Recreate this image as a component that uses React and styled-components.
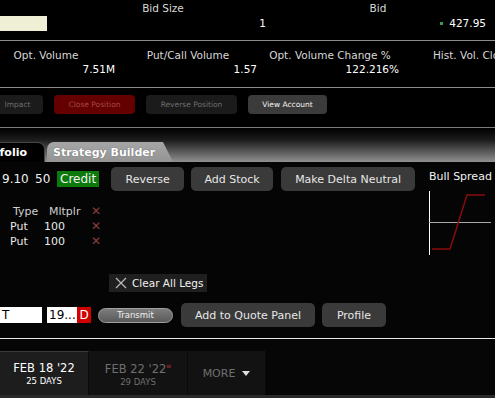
import React from "react";
import styled, { createGlobalStyle } from "styled-components";

const Global = createGlobalStyle`
  html, body {
    margin: 0;
    padding: 0;
    background: #000;
  }
  body {
    width: 495px;
    height: 398px;
    overflow: hidden;
    font-family: "DejaVu Sans", Verdana, sans-serif;
    color: #fff;
  }
`;

const Page = styled.div`
  width: 495px;
  height: 398px;
  overflow: hidden;
  display: flex;
  flex-direction: column;
  background: #000;
`;

/* ---------- quote header ---------- */
const QuoteGrid = styled.div`
  display: grid;
  grid-template-columns: 58px 210px 220px 1fr;
  grid-template-rows: 15px 15px;
  padding: 1px 0 9px;
  border-bottom: 1px solid #8c8c8c;
  font-size: 10.5px;
`;

const QuoteLabel = styled.div`
  color: #d8d8d8;
  text-align: center;
  line-height: 15px;
`;

const QuoteValue = styled.div`
  text-align: right;
  line-height: 15px;
  padding-right: 2px;
  display: flex;
  justify-content: flex-end;
  align-items: center;
  gap: 6px;
`;

const Beige = styled.div`
  width: 47px;
  height: 15px;
  background: #efefd6;
`;

const Tick = styled.span`
  width: 3px;
  height: 3px;
  background: #3f9a4d;
`;

/* ---------- stats ---------- */
const StatsRow = styled.div`
  display: flex;
  margin-left: -25px;
  height: 46px;
  border-bottom: 1px solid #8c8c8c;
  font-size: 10.5px;
`;

const Stat = styled.div`
  flex: 0 0 142px;
  display: flex;
  flex-direction: column;
  padding-top: 7px;
  white-space: nowrap;
`;

const StatLabel = styled.div`
  color: #d8d8d8;
  text-align: center;
  line-height: 14px;
`;

const StatValue = styled.div`
  text-align: right;
  padding-right: 2px;
  line-height: 14px;
`;

/* ---------- action buttons ---------- */
const ActionRow = styled.div`
  display: flex;
  gap: 11px;
  padding: 7px 0 13px;
  margin-left: -8px;
  border-bottom: 1px solid #7a7a7a;
`;

const ActionButton = styled.button`
  flex: 0 0 auto;
  height: 19px;
  width: ${(p) => p.$w}px;
  border: none;
  border-radius: 4px;
  font-family: "DejaVu Sans", Verdana, sans-serif;
  font-size: 7.5px;
  padding: 0;
  background: ${(p) =>
    p.$variant === "danger" ? "#640000" : p.$variant === "on" ? "#3b3b3b" : "#1b1b1b"};
  color: ${(p) =>
    p.$variant === "danger" ? "#a34a4a" : p.$variant === "on" ? "#f4f4f4" : "#6e6e6e"};
`;

/* ---------- tabs ---------- */
const TabBar = styled.div`
  height: 34px;
  display: flex;
  align-items: flex-end;
  background: linear-gradient(to bottom, #000 0%, #1c1c1c 35%, #909090 100%);
`;

const Tab = styled.div`
  flex: 0 0 auto;
  height: 20px;
  display: flex;
  align-items: center;
  font-size: 11px;
  font-weight: bold;
  white-space: nowrap;
  box-sizing: border-box;
  ${(p) =>
    p.$active
      ? `
    background: #000;
    width: 45px;
    border-radius: 0 7px 0 0;
    border-top: 1px solid #454545;
    border-right: 1px solid #454545;
    overflow: hidden;
    justify-content: flex-end;
    padding-right: 17px;
  `
      : `
    background: linear-gradient(to bottom, #a6a6a6, #949494);
    margin-left: 2px;
    width: 126px;
    padding-left: 6px;
    border-radius: 7px 0 0 0;
    clip-path: polygon(0 0, 116px 0, 126px 100%, 0 100%);
    text-shadow: 0 0 1px #555;
  `}
`;

/* ---------- builder ---------- */
const Builder = styled.div`
  display: flex;
  height: 176px;
  border-bottom: 1px solid #e6e6e6;
  background: #050505;
`;

const BuilderMain = styled.div`
  flex: 0 0 425px;
  display: flex;
  flex-direction: column;
`;

const TopRow = styled.div`
  display: flex;
  align-items: center;
  padding: 5px 0 0 2px;
  height: 24px;
  font-size: 12px;
`;

const Num = styled.span`
  width: ${(p) => p.$w}px;
  color: #eee;
`;

const Credit = styled.span`
  background: #0b7a0b;
  color: #f2f2f2;
  padding: 0 3px;
  line-height: 16px;
  margin-right: 12px;
`;

const GrayButton = styled.button`
  flex: 0 0 auto;
  height: 24px;
  width: ${(p) => p.$w}px;
  border: none;
  border-radius: 5px;
  background: #3a3a3a;
  color: #e6e6e6;
  font-family: "DejaVu Sans", Verdana, sans-serif;
  font-size: 11px;
  padding: 0;
  margin-right: ${(p) => p.$mr || 7}px;
`;

const Legs = styled.div`
  display: grid;
  grid-template-columns: 37px 44px 20px;
  grid-auto-rows: 15px;
  align-items: center;
  margin: 13px 0 0 10px;
  font-size: 11px;
  color: #e8e8e8;
`;

const LegHead = styled.span`
  color: #d0d0d0;
  padding-left: ${(p) => (p.$indent ? 2 : 3)}px;
`;

const LegCell = styled.span`
  margin-left: ${(p) => p.$ml || 0}px;
`;

const RemoveX = styled.span`
  color: #8a3d3d;
  font-weight: bold;
  font-size: 12px;
  line-height: 15px;
`;

const ClearButton = styled.button`
  align-self: flex-start;
  margin: 25px 0 0 109px;
  height: 18px;
  width: 98px;
  display: flex;
  align-items: center;
  gap: 5px;
  padding: 0 0 0 6px;
  border: none;
  background: #1f1f1f;
  color: #f0f0f0;
  font-family: "DejaVu Sans", Verdana, sans-serif;
  font-size: 10.5px;
  white-space: nowrap;
`;

const OrderRow = styled.div`
  display: flex;
  align-items: center;
  margin-top: 11px;
  height: 24px;
`;

const Field = styled.div`
  width: ${(p) => p.$w}px;
  height: 16px;
  background: #fff;
  color: #000;
  font-size: 12px;
  line-height: 16px;
  padding-left: 2px;
  box-sizing: border-box;
  margin-right: ${(p) => p.$mr || 0}px;
  overflow: hidden;
  white-space: nowrap;
`;

const RedTag = styled.div`
  width: 14px;
  height: 16px;
  background: #d10000;
  color: #fff;
  font-size: 12px;
  line-height: 16px;
  text-align: center;
  margin-right: 7px;
`;

const Transmit = styled.button`
  flex: 0 0 auto;
  width: 75px;
  height: 15px;
  border-radius: 8px;
  border: 1px solid #a0a0a0;
  background: linear-gradient(to bottom, #7c7c7c, #5a5a5a);
  color: #f0f0f0;
  font-family: "DejaVu Sans", Verdana, sans-serif;
  font-size: 8.5px;
  padding: 0;
  margin-right: 8px;
`;

const SideChart = styled.div`
  display: flex;
  flex-direction: column;
  padding: 7px 0 0 4px;
`;

const ChartTitle = styled.div`
  font-size: 11px;
  color: #f2f2f2;
  white-space: nowrap;
  line-height: 16px;
  margin-bottom: 6px;
`;

/* ---------- expiries ---------- */
const ExpiryBar = styled.div`
  display: flex;
  padding-top: 12px;
  flex: 1;
  background: #060606;
  border-bottom: 3px solid #2a2a2a;
`;

const Expiry = styled.div`
  width: ${(p) => p.$w}px;
  display: flex;
  flex-direction: column;
  align-items: center;
  justify-content: center;
  background: ${(p) => (p.$active ? "#1d1d1d" : "#121212")};
  border-top: 1px solid ${(p) => (p.$active ? "#3a3a3a" : "#121212")};
  border-right: 1px solid #0a0a0a;
  color: ${(p) => (p.$active ? "#fff" : "#6f6f6f")};
`;

const ExpDate = styled.div`
  font-size: 11.5px;
  line-height: 14px;
`;

const ExpDays = styled.div`
  font-size: 8.5px;
  line-height: 12px;
`;

const Star = styled.sup`
  color: #b03030;
  font-size: 6px;
`;

const More = styled.div`
  font-size: 11px;
  display: flex;
  align-items: center;
  gap: 7px;
`;

function PayoffChart() {
  return (
    <svg width="62" height="64" viewBox="0 0 62 64">
      <line x1="0.5" y1="0" x2="0.5" y2="64" stroke="#fff" strokeWidth="1" />
      <line x1="0" y1="31.5" x2="62" y2="31.5" stroke="#aaa" strokeWidth="1" />
      <polyline
        points="3,58 21,58 38,4 56,4"
        fill="none"
        stroke="#8a0c0c"
        strokeWidth="1.5"
      />
    </svg>
  );
}

export default function App() {
  return (
    <Page>
      <Global />
      <QuoteGrid>
        <div />
        <QuoteLabel>Bid Size</QuoteLabel>
        <QuoteLabel>Bid</QuoteLabel>
        <div />
        <Beige />
        <QuoteValue>1</QuoteValue>
        <QuoteValue>
          <Tick />
          427.95
        </QuoteValue>
        <div />
      </QuoteGrid>

      <StatsRow>
        <Stat>
          <StatLabel>Opt. Volume</StatLabel>
          <StatValue>7.51M</StatValue>
        </Stat>
        <Stat>
          <StatLabel>Put/Call Volume</StatLabel>
          <StatValue>1.57</StatValue>
        </Stat>
        <Stat>
          <StatLabel>Opt. Volume Change %</StatLabel>
          <StatValue>122.216%</StatValue>
        </Stat>
        <Stat>
          <StatLabel>Hist. Vol. Close</StatLabel>
          <StatValue>13.2%</StatValue>
        </Stat>
      </StatsRow>

      <ActionRow>
        <ActionButton $w={51}>Impact</ActionButton>
        <ActionButton $w={81} $variant="danger">Close Position</ActionButton>
        <ActionButton $w={91}>Reverse Position</ActionButton>
        <ActionButton $w={79} $variant="on">View Account</ActionButton>
      </ActionRow>

      <TabBar>
        <Tab $active>Portfolio</Tab>
        <Tab>Strategy Builder</Tab>
      </TabBar>

      <Builder>
        <BuilderMain>
          <TopRow>
            <Num $w={33}>9.10</Num>
            <Num $w={22}>50</Num>
            <Credit>Credit</Credit>
            <GrayButton $w={73}>Reverse</GrayButton>
            <GrayButton $w={82} $mr={8}>Add Stock</GrayButton>
            <GrayButton $w={134}>Make Delta Neutral</GrayButton>
          </TopRow>

          <Legs>
            <LegHead>Type</LegHead>
            <LegHead $indent>Mltplr</LegHead>
            <RemoveX>✕</RemoveX>
            <LegCell>Put</LegCell>
            <LegCell $ml={-3}>100</LegCell>
            <RemoveX>✕</RemoveX>
            <LegCell>Put</LegCell>
            <LegCell $ml={-3}>100</LegCell>
            <RemoveX>✕</RemoveX>
          </Legs>

          <ClearButton>
            <svg width="12" height="12" viewBox="0 0 12 12">
              <path d="M1 1 L11 11 M11 1 L1 11" stroke="#bbb" strokeWidth="1.2" />
            </svg>
            Clear All Legs
          </ClearButton>

          <OrderRow>
            <Field $w={42} $mr={5}>T</Field>
            <Field $w={30}>19....</Field>
            <RedTag>D</RedTag>
            <Transmit>Transmit</Transmit>
            <GrayButton $w={134}>Add to Quote Panel</GrayButton>
            <GrayButton $w={64}>Profile</GrayButton>
          </OrderRow>
        </BuilderMain>

        <SideChart>
          <ChartTitle>Bull Spread</ChartTitle>
          <PayoffChart />
        </SideChart>
      </Builder>

      <ExpiryBar>
        <Expiry $w={88} $active>
          <ExpDate>FEB 18 '22</ExpDate>
          <ExpDays>25 DAYS</ExpDays>
        </Expiry>
        <Expiry $w={98}>
          <ExpDate>
            FEB 22 '22<Star>w</Star>
          </ExpDate>
          <ExpDays>29 DAYS</ExpDays>
        </Expiry>
        <Expiry $w={77}>
          <More>
            MORE
            <svg width="8" height="6" viewBox="0 0 8 6">
              <path d="M0 0 H8 L4 5 Z" fill="#ddd" />
            </svg>
          </More>
        </Expiry>
      </ExpiryBar>
    </Page>
  );
}
